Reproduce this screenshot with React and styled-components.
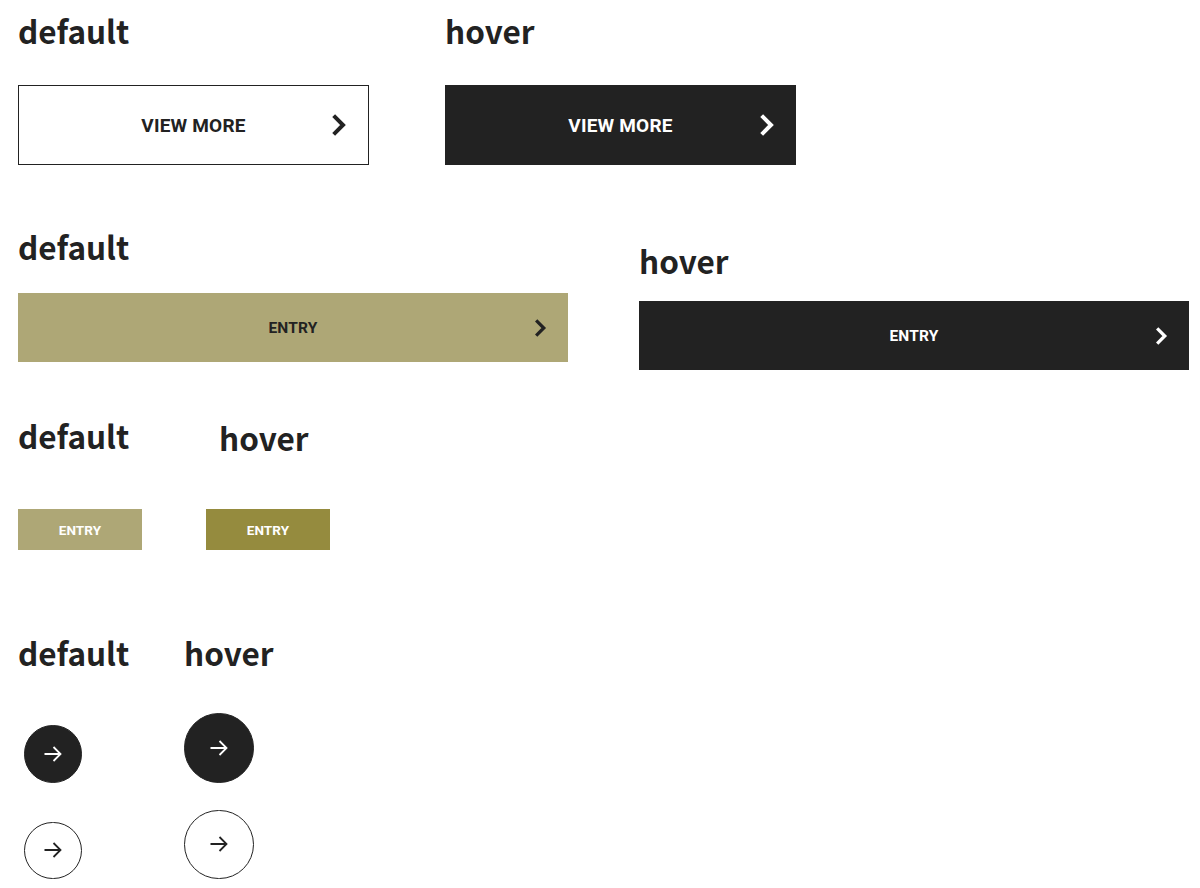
import React from "react";
import styled, { createGlobalStyle } from "styled-components";

const GlobalStyle = createGlobalStyle`
  html, body {
    margin: 0;
    padding: 0;
    background: #fff;
  }
  body {
    font-family: "Noto Sans CJK JP", "Noto Sans", sans-serif;
    color: #222;
  }
`;

const Page = styled.div`
  width: 1200px;
  height: 888px;
  overflow: hidden;
  padding: 10px 0 0 18px;
  box-sizing: border-box;
`;

const Row = styled.section`
  display: flex;
  gap: ${({ $gap }) => $gap}px;
  margin-bottom: ${({ $after }) => $after}px;
`;

const Column = styled.div`
  display: flex;
  flex-direction: column;
  align-items: flex-start;
  width: ${({ $width }) => ($width ? `${$width}px` : "auto")};
  padding-top: ${({ $top = 0 }) => $top}px;
`;

const Heading = styled.h2`
  margin: 0 0 ${({ $after }) => $after}px ${({ $indent = 0 }) => $indent}px;
  padding-bottom: 3px;
  font-size: 31.5px;
  line-height: 41px;
  font-weight: 700;
  color: #222;
  white-space: nowrap;
`;

const Button = styled.a`
  position: relative;
  display: flex;
  align-items: center;
  justify-content: center;
  box-sizing: border-box;
  width: ${({ $w }) => $w}px;
  height: ${({ $h }) => $h}px;
  background: ${({ $bg }) => $bg};
  color: ${({ $fg }) => $fg};
  border: ${({ $outline }) => ($outline ? "1px solid #222" : "none")};
  font-family: "Roboto", "Liberation Sans", sans-serif;
  font-weight: 700;
  font-size: ${({ $size }) => $size}px;
  letter-spacing: 0.01em;
`;

const Chevron = styled.svg`
  position: absolute;
  right: ${({ $right }) => $right}px;
  top: 50%;
  transform: translateY(-50%);
  fill: none;
  stroke: currentColor;
  stroke-width: 3;
`;

const Circle = styled.div`
  display: flex;
  align-items: center;
  justify-content: center;
  box-sizing: border-box;
  width: ${({ $d }) => $d}px;
  height: ${({ $d }) => $d}px;
  border-radius: 50%;
  background: ${({ $dark }) => ($dark ? "#222" : "#fff")};
  color: ${({ $dark }) => ($dark ? "#fff" : "#222")};
  border: 1px solid #222;
  margin-bottom: ${({ $after = 0 }) => $after}px;
  margin-left: ${({ $indent = 0 }) => $indent}px;
`;

const Arrow = () => (
  <svg width="18" height="16" viewBox="0 0 18 16" fill="none" stroke="currentColor" strokeWidth="1.8">
    <path d="M0.5 8H16.5M9.5 1l7 7-7 7" />
  </svg>
);

const Cta = ({ label, chevron, chevronRight, ...rest }) => (
  <Button {...rest}>
    {label}
    {chevron && (
      <Chevron $right={chevronRight} width={chevron} height={chevron * 1.5} viewBox="0 0 12 18">
        <path d="M2 2l7 7-7 7" />
      </Chevron>
    )}
  </Button>
);

export default function App() {
  return (
    <Page>
      <GlobalStyle />
      <Row $gap={76} $after={61}>
        <Column>
          <Heading $after={31}>default</Heading>
          <Cta label="VIEW MORE" chevron={16} chevronRight={21} $w={351} $h={80} $bg="#fff" $fg="#222" $outline $size={19} />
        </Column>
        <Column>
          <Heading $after={31}>hover</Heading>
          <Cta label="VIEW MORE" chevron={16} chevronRight={21} $w={351} $h={80} $bg="#222" $fg="#fff" $size={19} />
        </Column>
      </Row>
      <Row $gap={71} $after={45}>
        <Column $width={550}>
          <Heading $after={23}>default</Heading>
          <Cta label="ENTRY" chevron={13} chevronRight={21} $w={550} $h={69} $bg="#aea776" $fg="#222" $size={15.5} />
        </Column>
        <Column $top={14} $width={550}>
          <Heading $after={17}>hover</Heading>
          <Cta label="ENTRY" chevron={13} chevronRight={21} $w={550} $h={69} $bg="#222" $fg="#fff" $size={15.5} />
        </Column>
      </Row>
      <Row $gap={64} $after={82}>
        <Column $width={124}>
          <Heading $after={50}>default</Heading>
          <Cta label="ENTRY" $w={124} $h={41} $bg="#aea776" $fg="#fff" $size={13.5} />
        </Column>
        <Column $top={2}>
          <Heading $after={48} $indent={13}>hover</Heading>
          <Cta label="ENTRY" $w={124} $h={41} $bg="#958b3e" $fg="#fff" $size={13.5} />
        </Column>
      </Row>
      <Row $gap={55}>
        <Column $width={111}>
          <Heading $after={49}>default</Heading>
          <Circle $d={57.5} $dark $after={39} $indent={6}><Arrow /></Circle>
          <Circle $d={57.5} $indent={6}><Arrow /></Circle>
        </Column>
        <Column>
          <Heading $after={37}>hover</Heading>
          <Circle $d={69.5} $dark $after={27}><Arrow /></Circle>
          <Circle $d={69.5}><Arrow /></Circle>
        </Column>
      </Row>
    </Page>
  );
}
